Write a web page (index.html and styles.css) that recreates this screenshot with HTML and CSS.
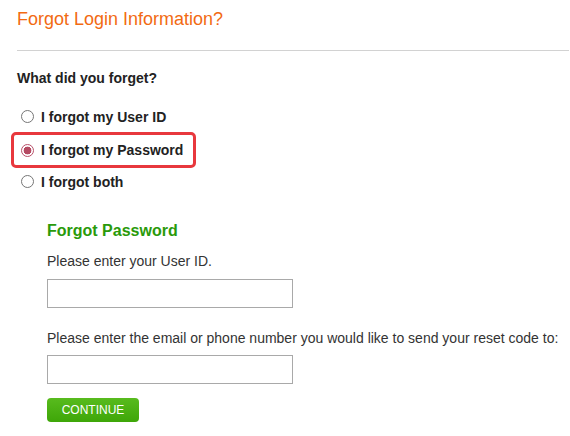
FILE: index.html
```html
<!DOCTYPE html>
<html lang="en">
<head>
<meta charset="utf-8">
<title>Forgot Login Information?</title>
<link rel="stylesheet" href="styles.css">
</head>
<body>
<div class="page">
  <h1 class="title">Forgot Login Information?</h1>
  <hr class="rule">
  <p class="question">What did you forget?</p>
  <div class="options">
    <label class="option"><input type="radio" name="forgot" class="radio"><span>I forgot my User ID</span></label>
    <label class="option option-selected"><input type="radio" name="forgot" class="radio" checked><span>I forgot my Password</span></label>
    <label class="option"><input type="radio" name="forgot" class="radio"><span>I forgot both</span></label>
  </div>
  <div class="form">
    <h2 class="form-title">Forgot Password</h2>
    <p class="label">Please enter your User ID.</p>
    <input type="text" class="field">
    <p class="label label-second">Please enter the email or phone number you would like to send your reset code to:</p>
    <input type="text" class="field field-second">
    <button class="continue" type="button">CONTINUE</button>
  </div>
</div>
</body>
</html>
```
FILE: styles.css
```css
html, body {
  margin: 0;
  padding: 0;
  background: #fff;
}
body {
  font-family: "Liberation Sans", Arial, sans-serif;
  color: #333;
}
.page {
  padding: 9px 1px 0 17px;
}
.title {
  margin: 0;
  font-size: 18px;
  font-weight: normal;
  line-height: 20px;
  color: #f26a12;
}
.rule {
  margin: 21px 0 0 0;
  border: 0;
  border-top: 1px solid #d2d2d2;
  height: 0;
}
.question {
  margin: 19px 0 0 0;
  font-size: 14px;
  font-weight: bold;
  line-height: 16px;
  color: #222;
}
.options {
  display: flex;
  flex-direction: column;
  margin-top: 14px;
  margin-left: -6px;
}
.option {
  display: flex;
  align-items: center;
  gap: 7px;
  height: 33px;
  padding: 0 0 0 5px;
  border: 3px solid transparent;
  border-radius: 5px;
  width: 179px;
  box-sizing: border-box;
  font-size: 14px;
  font-weight: bold;
  color: #222;
}
.option-selected {
  border-color: #e8383d;
  height: 36px;
  width: 185px;
  margin: -1px 0 -3px 0;
}
.radio {
  appearance: none;
  -webkit-appearance: none;
  margin: 0 0 0 2px;
  width: 13px;
  height: 13px;
  border: 1px solid #767676;
  border-radius: 50%;
  background: #fff;
  box-sizing: border-box;
  flex: none;
}
.radio:checked {
  border-color: #b9506a;
  background: radial-gradient(circle, #b44a62 0 3.6px, #fff 4.2px);
}
.form {
  padding-left: 30px;
  margin-top: 24px;
}
.form-title {
  margin: 0;
  font-size: 16px;
  font-weight: bold;
  line-height: 18px;
  color: #2a9a0a;
}
.label {
  margin: 13px 0 0 0;
  font-size: 14px;
  line-height: 16px;
  color: #333;
}
.label-second {
  margin-top: 22px;
}
.field {
  display: block;
  margin: 10px 0 0 0;
  width: 246px;
  height: 29px;
  box-sizing: border-box;
  border: 1px solid #a9a9a9;
  border-radius: 0;
  background: #fff;
  padding: 0 6px;
}
.field-second {
  margin-top: 9px;
}
.continue {
  display: block;
  margin-top: 14px;
  width: 92px;
  height: 24px;
  border: 0;
  border-radius: 4px;
  background: linear-gradient(#58bb1e, #3ea608);
  color: #fff;
  font-family: "Liberation Sans", Arial, sans-serif;
  font-size: 12px;
  padding: 0;
}
```
